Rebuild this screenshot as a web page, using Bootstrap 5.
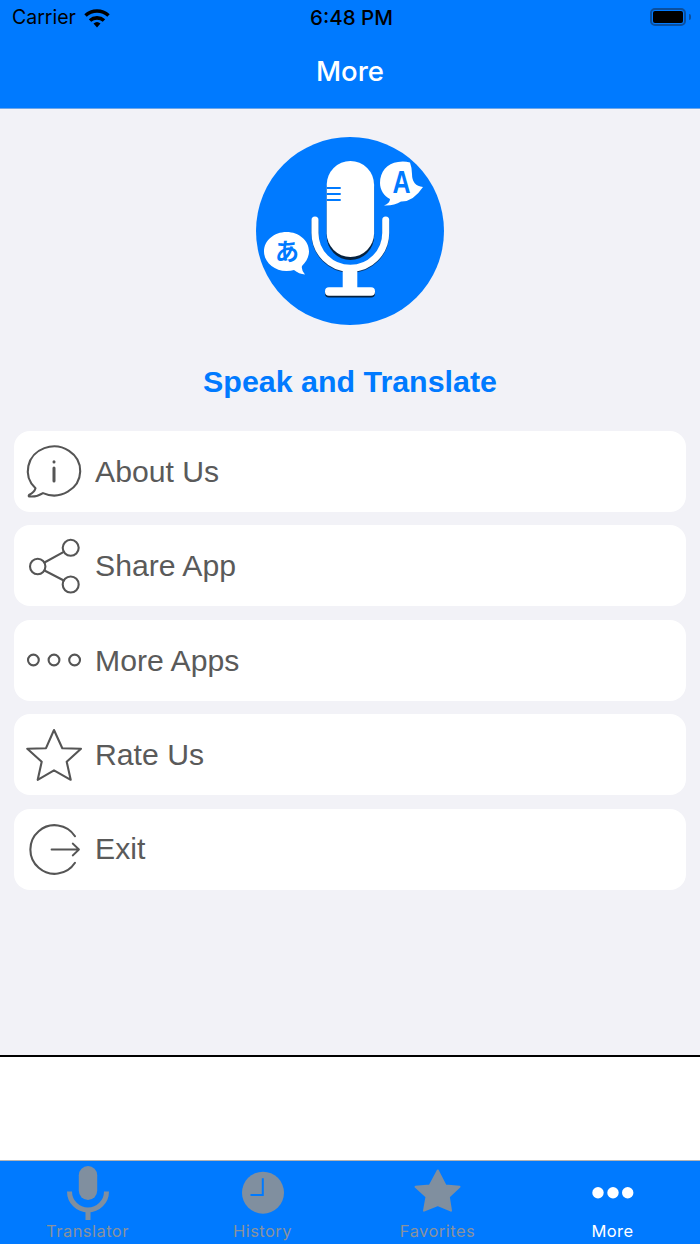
<!DOCTYPE html>
<html lang="en">
<head>
    <meta charset="UTF-8">
    <meta name="viewport" content="width=device-width, initial-scale=1.0">
    <title>More - Speak and Translate</title>
    <link href="https://cdn.jsdelivr.net/npm/bootstrap@5.3.3/dist/css/bootstrap.min.css" rel="stylesheet">
    <style>
        body {
            font-family: "Liberation Sans", Arial, sans-serif;
            background-color: #f2f2f7;
        }
        .app-screen {
            width: 700px;
            height: 1244px;
            overflow: hidden;
        }
        .top-bar {
            height: 109px;
            background-color: #007aff;
            border-bottom: 1px solid #6ea6e8;
        }
        .status-line {
            height: 36px;
            padding: 0 9px 0 12px;
            font-family: Inter, sans-serif;
            font-size: 19.5px;
            color: #000;
        }
        .status-side {
            width: 120px;
        }
        .status-time {
            font-size: 20.5px;
            font-weight: 500;
        }
        .nav-title {
            height: 72px;
            color: #fff;
            font-family: Inter, sans-serif;
            font-size: 27.5px;
            font-weight: 500;
        }
        .battery-wrap {
            margin-bottom: 3px;
        }
        .battery-shell {
            width: 36px;
            height: 18px;
            padding: 1px;
            border: 2px solid #0b4f9e;
            border-radius: 5px;
        }
        .battery-level {
            background-color: #000;
            border-radius: 2px;
        }
        .battery-nub {
            width: 2px;
            height: 6px;
            margin-left: 3px;
            background-color: #0b4f9e;
            border-radius: 0 2px 2px 0;
        }
        .app-logo {
            margin-top: 28px;
        }
        .app-name {
            margin: 37px 0 31px;
            font-size: 30.4px;
            line-height: 38px;
            font-weight: 700;
            color: #007aff;
        }
        .menu-stack {
            padding: 0 14px;
            gap: 13.4px;
        }
        .menu-row {
            height: 81px;
            padding-left: 13px;
            gap: 14px;
            background-color: #fff;
            border-radius: 16px;
            font-size: 30.2px;
            color: #5a5a5a;
        }
        .menu-row svg {
            fill: none;
            stroke: #555;
            stroke-width: 2.1;
            stroke-linecap: round;
            stroke-linejoin: round;
            flex-shrink: 0;
            overflow: visible;
        }
        .menu-row svg .info-mark {
            stroke-width: 3;
        }
        .menu-row svg .thin-line {
            stroke-width: 1.8;
        }
        .ad-space {
            height: 105px;
            background-color: #fff;
            border-top: 2px solid #000;
        }
        .tab-strip {
            height: 84px;
            background-color: #007aff;
            border-top: 1px solid #b4b4b4;
        }
        .tab-cell {
            width: 175px;
            padding-top: 3px;
            font-family: Inter, sans-serif;
            font-size: 16.5px;
            letter-spacing: .45px;
            line-height: 20px;
            color: #8a929c;
        }
        .tab-cell svg {
            fill: #808f9f;
            display: block;
        }
        .tab-cell.tab-on {
            color: #fff;
        }
        .tab-cell.tab-on svg {
            fill: #fff;
        }
    </style>
</head>
<body>
<div class="app-screen d-flex flex-column">

    <!-- status + title -->
    <header class="top-bar">
        <div class="status-line d-flex align-items-center justify-content-between">
            <div class="status-side d-flex align-items-center">
                <span>Carrier</span>
                <svg class="ms-2" width="26" height="19" viewBox="0 0 26 19">
                    <path d="M13 18.500 9.500 14.600a5.200 5.200 0 0 1 7 0Z" fill="#000"/>
                    <path d="M6 11.500A10.500 10.500 0 0 1 20 11.500M1.500 6.500A17 17 0 0 1 24.500 6.500" fill="none" stroke="#000" stroke-width="3.600"/>
                </svg>
            </div>
            <span class="status-time">6:48 PM</span>
            <div class="status-side battery-wrap d-flex align-items-center justify-content-end">
                <div class="battery-shell d-flex"><div class="battery-level flex-grow-1"></div></div>
                <div class="battery-nub"></div>
            </div>
        </div>
        <div class="nav-title d-flex align-items-center justify-content-center">More</div>
    </header>

    <main class="flex-grow-1">
        <div class="text-center app-logo">
            <svg width="188" height="188" viewBox="256 137 188 188">
                <circle cx="350" cy="231" r="94" fill="#007aff"/>
                <!-- shadows -->
                <rect x="326.700" y="163" width="47.400" height="97" rx="23.700" fill="#06223f"/>
                <path d="M315 220V233A35.300 35.300 0 0 0 385.700 233V220" fill="none" stroke="#0a3a70" stroke-width="7" stroke-linecap="round" transform="translate(0 1)"/>
                <rect x="325" y="289.500" width="50" height="8" rx="4" fill="#06223f"/>
                <!-- mic -->
                <path d="M315 220V233A35.300 35.300 0 0 0 385.700 233V220" fill="none" stroke="#fff" stroke-width="7" stroke-linecap="round"/>
                <rect x="326.700" y="161" width="47.400" height="96" rx="23.700" fill="#fff"/>
                <path d="M326.700 188h14M326.700 194h14M326.700 200h14" stroke="#007aff" stroke-width="1.800"/>
                <path d="M342.700 269h14.600v20h-14.600z" fill="#fff"/>
                <rect x="325" y="287.300" width="50" height="8.400" rx="4" fill="#fff"/>
                <!-- A bubble -->
                <path d="M410 162.500Q404 161 398 162C387 163 380 172 380 183C380 190 384 196 390 199Q390 203 384 205.500Q394 206 401 201.500Q413 202 423 187Q412 186 412 174Q412 168 410 162.500Z" fill="#fff"/>
                <text x="0" y="193" transform="translate(401.500 0) scale(.78 1)" text-anchor="middle" font-family="Liberation Sans" font-weight="700" font-size="32" fill="#007aff">A</text>
                <!-- japanese bubble -->
                <path d="M286.500 232C274 232 264 240.500 264 251.500C264 262 274 271 286.500 271Q291 271 294 270Q299 274 305 274.500Q301 270 302 266C306 262 309 257 309 251.500C309 240.500 299 232 286.500 232Z" fill="#fff"/>
                <text x="287" y="260" text-anchor="middle" font-family="Noto Sans CJK JP" font-weight="700" font-size="24" fill="#007aff">あ</text>
            </svg>
        </div>
        <div class="app-name text-center">Speak and Translate</div>

        <div class="menu-stack d-flex flex-column">
            <div class="menu-row d-flex align-items-center">
                <svg width="54" height="54" viewBox="0 0 54 54">
                    <path d="M16 48.100A26.200 24.500 0 1 0 8.500 43.200Q7.500 47 2 50Q1 51.500 3 51.500Q10 52 16 48.100Z"/>
                    <path class="info-mark" d="M27 23V36"/>
                    <path class="info-mark" d="M27 16.800V17"/>
                </svg>
                <span>About Us</span>
            </div>
            <div class="menu-row d-flex align-items-center">
                <svg width="54" height="54" viewBox="0 0 54 54">
                    <circle cx="43.700" cy="8.800" r="8"/>
                    <circle cx="10.700" cy="27.500" r="7.700"/>
                    <circle cx="43.700" cy="45.500" r="8"/>
                    <path d="M17.500 23.500 36.800 12.800M17.500 31.500 36.800 41.500"/>
                </svg>
                <span>Share App</span>
            </div>
            <div class="menu-row d-flex align-items-center">
                <svg width="54" height="54" viewBox="0 0 54 54">
                    <circle cx="6.400" cy="27" r="5.400"/>
                    <circle cx="27" cy="27" r="5.400"/>
                    <circle cx="47.600" cy="27" r="5.400"/>
                </svg>
                <span>More Apps</span>
            </div>
            <div class="menu-row d-flex align-items-center">
                <svg width="54" height="54" viewBox="0 0 54 54">
                    <path d="M27 2 35.300 20.200 54 20.800 39.700 33.800 43.700 51.800 27 42.300 10.700 51.800 14.700 33.800 .3 20.800 19 20.200Z"/>
                </svg>
                <span>Rate Us</span>
            </div>
            <div class="menu-row d-flex align-items-center">
                <svg width="54" height="54" viewBox="0 0 54 54">
                    <path d="M48 14.200A24.300 24.300 0 1 0 48 40.800"/>
                    <path class="thin-line" d="M24.500 27.500H52M45.700 21.500 52 27.500 45.700 33.500"/>
                </svg>
                <span>Exit</span>
            </div>
        </div>
    </main>

    <div class="ad-space"></div>

    <!-- tabs -->
    <nav class="tab-strip d-flex">
        <div class="tab-cell d-flex flex-column align-items-center">
            <svg width="60" height="57" viewBox="0 0 60 57">
                <rect x="20.800" y="2" width="18.400" height="34" rx="9.200"/>
                <path d="M11.500 27.500A18.500 18.500 0 0 0 48.500 27.500" fill="none" stroke="#808f9f" stroke-width="5"/>
                <rect x="27.500" y="46" width="5" height="10"/>
            </svg>
            <span>Translator</span>
        </div>
        <div class="tab-cell d-flex flex-column align-items-center">
            <svg width="60" height="57" viewBox="0 0 60 57">
                <circle cx="30" cy="28.700" r="21"/>
                <path d="M29.800 14.300V31H17.500" fill="none" stroke="#007aff" stroke-width="2"/>
            </svg>
            <span>History</span>
        </div>
        <div class="tab-cell d-flex flex-column align-items-center">
            <svg width="60" height="57" viewBox="0 0 60 57">
                <path d="M29.800 6.500 37.500 21.500 51.500 22.800 40.800 32.700 43 46.700 29.800 41 16 46.700 18.500 32.700 7.500 22.800 21.800 21.500Z" stroke="#808f9f" stroke-width="2" stroke-linejoin="round"/>
            </svg>
            <span>Favorites</span>
        </div>
        <div class="tab-cell tab-on d-flex flex-column align-items-center">
            <svg width="60" height="57" viewBox="0 0 60 57">
                <circle cx="15" cy="28.700" r="5.700"/>
                <circle cx="30" cy="28.700" r="5.700"/>
                <circle cx="44.700" cy="28.700" r="5.700"/>
            </svg>
            <span>More</span>
        </div>
    </nav>
</div>
<script src="https://cdn.jsdelivr.net/npm/bootstrap@5.3.3/dist/js/bootstrap.bundle.min.js"></script>
</body>
</html>
